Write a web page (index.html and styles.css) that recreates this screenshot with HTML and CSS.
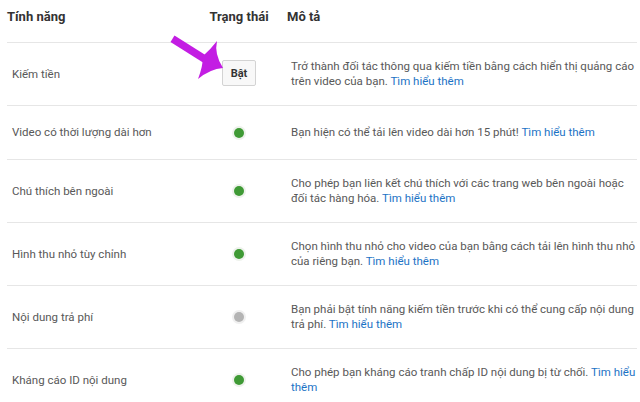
FILE: index.html
```html
<!DOCTYPE html>
<html lang="vi">
<head>
<meta charset="utf-8">
<link rel="stylesheet" href="styles.css">
</head>
<body>
<div class="page">
  <div class="table">
    <div class="row head">
      <div class="c-feat">Tính năng</div>
      <div class="c-stat">Trạng thái</div>
      <div class="c-desc">Mô tả</div>
    </div>
    <div class="row">
      <div class="c-feat">Kiếm tiền</div>
      <div class="c-stat"><button class="btn">Bật</button></div>
      <div class="c-desc">Trở thành đối tác thông qua kiếm tiền bằng cách hiển thị quảng cáo trên video của bạn. <a class="link">Tìm hiểu thêm</a></div>
    </div>
    <div class="row">
      <div class="c-feat">Video có thời lượng dài hơn</div>
      <div class="c-stat"><span class="dot on"></span></div>
      <div class="c-desc">Bạn hiện có thể tải lên video dài hơn 15 phút! <a class="link">Tìm hiểu thêm</a></div>
    </div>
    <div class="row">
      <div class="c-feat">Chú thích bên ngoài</div>
      <div class="c-stat"><span class="dot on"></span></div>
      <div class="c-desc">Cho phép bạn liên kết chú thích với các trang web bên ngoài hoặc đối tác hàng hóa. <a class="link">Tìm hiểu thêm</a></div>
    </div>
    <div class="row">
      <div class="c-feat">Hình thu nhỏ tùy chỉnh</div>
      <div class="c-stat"><span class="dot on"></span></div>
      <div class="c-desc">Chọn hình thu nhỏ cho video của bạn bằng cách tải lên hình thu nhỏ của riêng bạn. <a class="link">Tìm hiểu thêm</a></div>
    </div>
    <div class="row">
      <div class="c-feat">Nội dung trả phí</div>
      <div class="c-stat"><span class="dot off"></span></div>
      <div class="c-desc">Bạn phải bật tính năng kiếm tiền trước khi có thể cung cấp nội dung trả phí. <a class="link">Tìm hiểu thêm</a></div>
    </div>
    <div class="row">
      <div class="c-feat">Kháng cáo ID nội dung</div>
      <div class="c-stat"><span class="dot on"></span></div>
      <div class="c-desc">Cho phép bạn kháng cáo tranh chấp ID nội dung bị từ chối. <a class="link">Tìm hiểu thêm</a></div>
    </div>
  </div>
  <svg class="arrow" width="80" height="60" viewBox="165 30 80 60">
    <path d="M170.5 42 L174.5 35.5 L207 56 L203 62.5 Z" fill="#c31de3"/>
    <path d="M217 41 Q214 54 223 68 Q210 69 198 79 Q203 66 203 56 Q210 50 217 41 Z" fill="#c31de3"/>
  </svg>
</div>
</body>
</html>
```
FILE: styles.css
```css
html, body {
  margin: 0;
  padding: 0;
  background: #ffffff;
}
body {
  font-family: Roboto, "Liberation Sans", Arial, sans-serif;
  font-size: 11.5px;
  color: #585858;
}
.page {
  position: relative;
  width: 640px;
  height: 402px;
  overflow: hidden;
}
.table {
  padding: 0 3px 0 7px;
}
.row {
  display: grid;
  grid-template-columns: 192px 80px 1fr;
  align-items: center;
  min-height: 54px;
  box-sizing: border-box;
  padding: 16px 0;
  border-bottom: 1px solid #e6e6e6;
  line-height: 15px;
}
.row.head {
  min-height: 0;
  height: 43px;
  padding: 10px 0 0;
  align-items: start;
  font-size: 13px;
  line-height: 14px;
  font-weight: bold;
  color: #333333;
}
.c-feat {
  padding-left: 5px;
}
.c-stat {
  display: flex;
  justify-content: center;
  align-items: center;
}
.c-desc {
  padding-left: 12px;
}
.head .c-feat {
  padding-left: 0;
}
.head .c-desc {
  padding-left: 8px;
}
.link {
  color: #1c73c5;
  text-decoration: none;
}
.btn {
  width: 34px;
  height: 26px;
  padding: 0;
  border: 1px solid #d3d3d3;
  border-radius: 2px;
  background: #f8f8f8;
  font-family: Roboto, "Liberation Sans", Arial, sans-serif;
  font-size: 11px;
  font-weight: bold;
  color: #333333;
  margin-top: -2px;
}
.dot {
  display: block;
  width: 10px;
  height: 10px;
  border-radius: 50%;
  box-shadow: 0 0 0 2px #eef2ec;
}
.dot.on {
  background: #3f9a35;
}
.dot.off {
  background: #b4b4b4;
  box-shadow: 0 0 0 2px #f0f0f0;
}
.arrow {
  position: absolute;
  left: 165px;
  top: 30px;
}
```
